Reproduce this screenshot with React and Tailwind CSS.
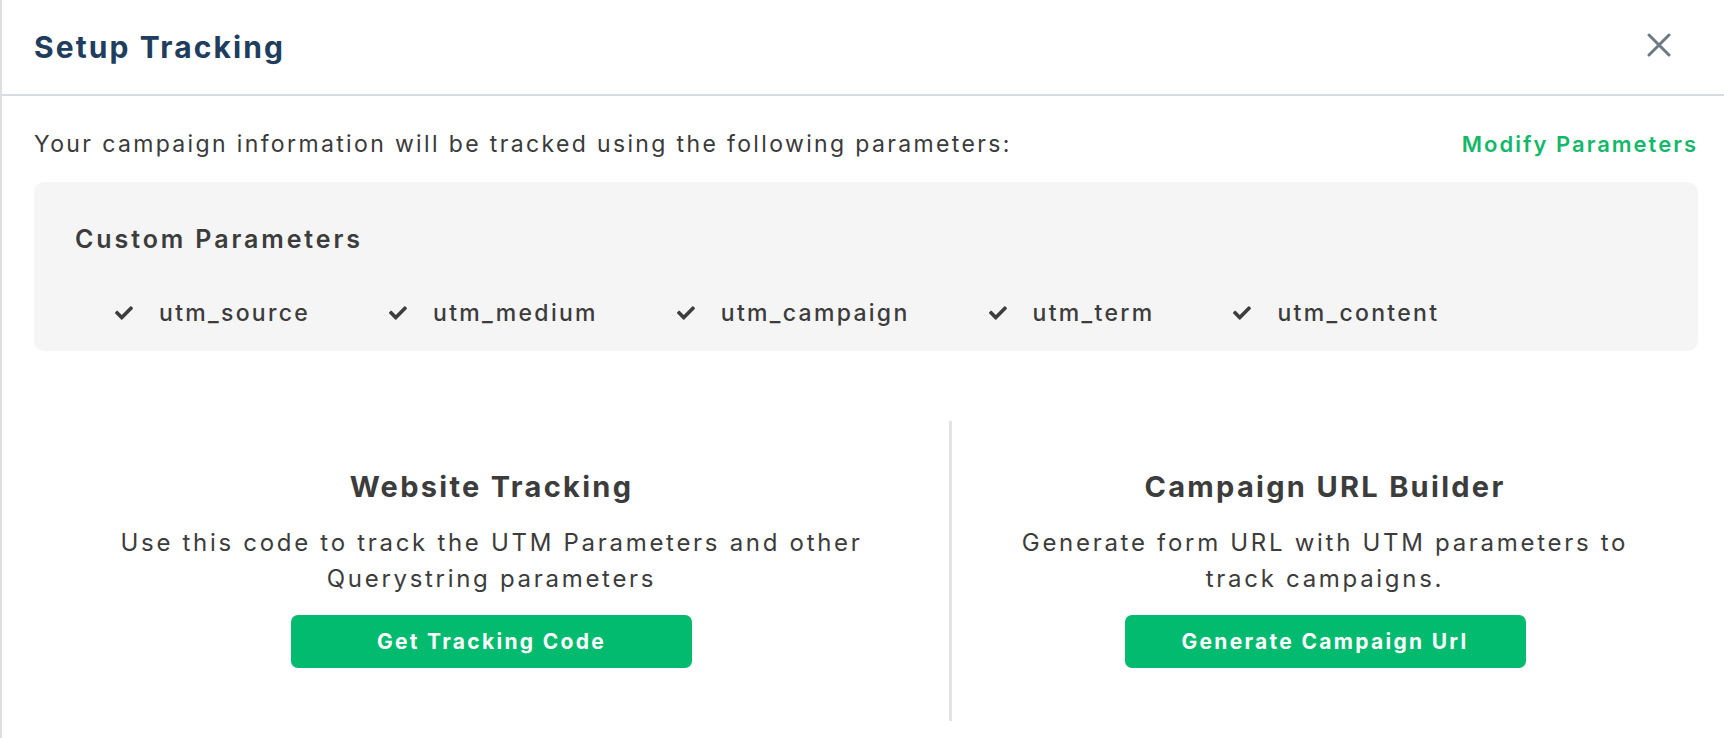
import { FaCheck } from 'react-icons/fa'

const params = ['utm_source', 'utm_medium', 'utm_campaign', 'utm_term', 'utm_content']

// ── Close icon ────────────────────────────────────────────────────────────────
function CloseIcon() {
  return (
    <svg width="24" height="24" viewBox="0 0 24 24" fill="none">
      <path d="M2 2L22 22M22 2L2 22" stroke="#6b7a85" strokeWidth="3" strokeLinecap="round" />
    </svg>
  )
}

// ── One tracking option column ────────────────────────────────────────────────
function Option({ title, lines, button }) {
  return (
    <div className="flex flex-col items-center text-center pt-[48px]">
      <h3 className="text-[29px] leading-[36px] font-bold tracking-[2.3px] text-[#3c3c3c]">{title}</h3>
      <p className="mt-[20px] text-[24px] leading-[36px] tracking-[2.7px] text-[#3c3c3c]">
        {lines[0]}
        <br />
        {lines[1]}
      </p>
      <button className="mt-[18px] w-[401px] h-[53px] rounded-[7px] bg-[#02bb6f] text-white text-[21px] font-bold tracking-[2.3px]">
        {button}
      </button>
    </div>
  )
}

export default function App() {
  return (
    <div className="w-[1724px] h-[738px] bg-white border-l-2 border-[#dedede] overflow-hidden font-['Inter',sans-serif]">
      {/* Header */}
      <div className="h-[96px] border-b-2 border-[#d6dbdf] flex items-center justify-between pl-[32px] pr-[53px]">
        <h2 className="text-[30px] font-bold tracking-[2.1px] text-[#213d5d]">Setup Tracking</h2>
        <button className="mt-[-4px]">
          <CloseIcon />
        </button>
      </div>

      <div className="pl-[32px] pr-[26px]">
        <div className="mt-[34px] h-[28px] flex items-center justify-between">
          <p className="text-[23px] tracking-[2.36px] text-[#3a3a3a]">
            Your campaign information will be tracked using the following parameters:
          </p>
          <a className="text-[22px] font-semibold tracking-[2px] text-[#14b86a]">Modify Parameters</a>
        </div>

        {/* Custom parameters box */}
        <div className="mt-[24px] h-[169px] rounded-[10px] bg-[#f5f5f5] pl-[41px] pt-[42px]">
          <h4 className="text-[25px] leading-[30px] font-semibold tracking-[2.9px] text-[#3c3c3c]">Custom Parameters</h4>
          <div className="mt-[45px] pl-[40px] flex items-center gap-[79px]">
            {params.map(p => (
              <div key={p} className="flex items-center h-[28px]">
                <FaCheck className="w-[18px] h-[18px] text-[#3d3d3d]" />
                <span className="ml-[26px] text-[23px] font-medium tracking-[2.3px] text-[#3c3c3c]">{p}</span>
              </div>
            ))}
          </div>
        </div>

        {/* Options */}
        <div className="mt-[70px] h-[300px] flex">
          <div className="w-[915px]">
            <Option
              title="Website Tracking"
              lines={['Use this code to track the UTM Parameters and other', 'Querystring parameters']}
              button="Get Tracking Code"
            />
          </div>
          <div className="w-[3px] bg-[#e4e4e4]" />
          <div className="flex-1">
            <Option
              title="Campaign URL Builder"
              lines={['Generate form URL with UTM parameters to', 'track campaigns.']}
              button="Generate Campaign Url"
            />
          </div>
        </div>
      </div>
    </div>
  )
}
